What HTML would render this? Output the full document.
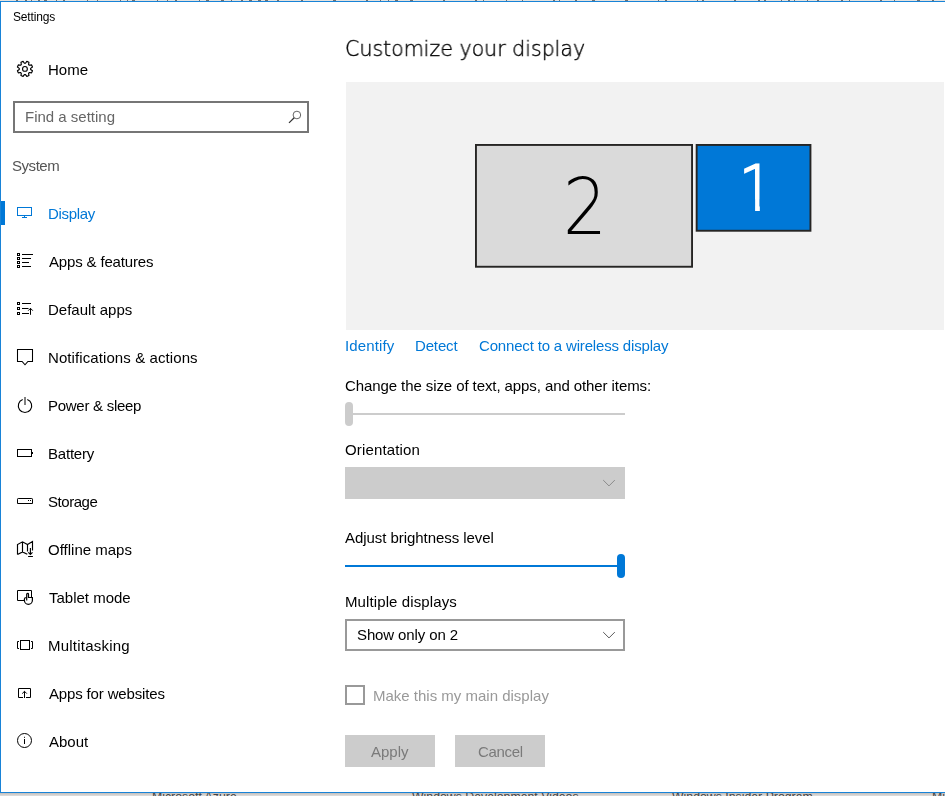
<!DOCTYPE html>
<html><head><meta charset="utf-8">
<style>
html,body{margin:0;padding:0;}
body{width:945px;height:796px;overflow:hidden;background:#fff;position:relative;font-family:"Liberation Sans",sans-serif;color:#000;}
.abs{position:absolute;white-space:nowrap;}
.t{position:absolute;white-space:nowrap;font-size:15px;line-height:20px;transform-origin:0 50%;will-change:transform;}
.nav{left:48px;}
.blue{color:#0078d7;}
svg{position:absolute;left:0;top:0;}
</style></head><body>
<!-- window chrome -->
<div class="abs" id="topstrip" style="left:0;top:0;width:945px;height:1px;background:#e4e2df;"></div>
<div class="abs" style="left:0;top:1px;width:945px;height:1px;background:#1883d7;"></div>
<div class="abs" style="left:0;top:1px;width:1px;height:792px;background:#1883d7;"></div>
<div class="abs" style="left:0;top:792px;width:945px;height:1px;background:#1883d7;"></div>
<div class="abs" id="botstrip" style="left:0;top:793px;width:945px;height:3px;background:linear-gradient(#c4bfbb,#dedede);overflow:hidden;font-size:12.3px;line-height:13px;color:#444;">
<div class="abs" id="b1" style="left:152px;top:-2px;">Microsoft Azure</div>
<div class="abs" id="b2" style="left:412px;top:-2px;">Windows Development Videos</div>
<div class="abs" id="b3" style="left:672px;top:-2px;">Windows Insider Program</div>
<div class="abs" id="b4" style="left:932px;top:-2px;">Microsoft</div>
</div>

<div class="t" id="title" style="letter-spacing:-0.157px;left:13px;top:7px;font-size:12px;">Settings</div>

<div class="t nav" id="home" style="top:60px;">Home</div>
<div class="abs" id="search" style="left:13px;top:101px;width:292px;height:28px;border:2px solid #767676;"></div>
<div class="t" id="find" style="left:25px;top:107px;color:#666;">Find a setting</div>
<div class="t" id="system" style="letter-spacing:-0.450px;left:12px;top:156px;color:#555;">System</div>

<div class="abs" style="left:1px;top:201px;width:4px;height:24px;background:#0078d7;"></div>
<div class="t nav blue" id="n0" style="letter-spacing:-0.333px;top:204px;">Display</div>
<div class="t nav" id="n1" style="letter-spacing:-0.161px;top:252px;left:49px;">Apps &amp; features</div>
<div class="t nav" id="n2" style="top:300px;">Default apps</div>
<div class="t nav" id="n3" style="letter-spacing:0.091px;top:348px;">Notifications &amp; actions</div>
<div class="t nav" id="n4" style="letter-spacing:-0.271px;top:396px;">Power &amp; sleep</div>
<div class="t nav" id="n5" style="letter-spacing:-0.208px;top:444px;">Battery</div>
<div class="t nav" id="n6" style="letter-spacing:-0.458px;top:492px;">Storage</div>
<div class="t nav" id="n7" style="top:540px;">Offline maps</div>
<div class="t nav" id="n8" style="top:588px;left:49px;">Tablet mode</div>
<div class="t nav" id="n9" style="letter-spacing:0.227px;top:636px;">Multitasking</div>
<div class="t nav" id="n10" style="letter-spacing:-0.156px;top:684px;left:49px;">Apps for websites</div>
<div class="t nav" id="n11" style="top:732px;left:49px;">About</div>

<!-- right pane -->
<div class="t" id="h1" style="left:344.5px;top:34px;font-family:'DejaVu Sans Light','DejaVu Sans',sans-serif;font-weight:200;font-size:21.5px;line-height:30px;color:#000;transform-origin:0 50%;transform:scaleX(0.956);-webkit-text-stroke:0.4px #000;">Customize your display</div>
<div class="abs" style="left:346px;top:82px;width:598px;height:248px;background:#f2f2f2;"></div>
<div class="abs" id="m2" style="left:475.5px;top:144.5px;width:217px;height:122.7px;background:#dadada;"></div>
<div class="abs" id="m1" style="left:696.2px;top:144.5px;width:114.7px;height:86.7px;background:#0078d7;"></div>
<div class="abs" id="d2" style="left:562.9px;top:158.9px;font-family:'DejaVu Sans Light','DejaVu Sans',sans-serif;font-weight:200;font-size:80px;line-height:100px;transform-origin:0 0;transform:scale(0.863,0.98);">2</div>
<div class="abs" id="d1" style="left:738.6px;top:145.9px;font-family:'DejaVu Sans Light','DejaVu Sans',sans-serif;font-weight:200;font-size:65px;line-height:90px;color:#fff;-webkit-text-stroke:2.05px #fff;transform-origin:0 0;transform:scale(0.84,0.949);clip-path:polygon(0 0,26px 0,26px 56px,24.8px 56px,24.8px 72px,19.15px 72px,19.15px 56px,0 56px);">1</div>

<div class="t blue" id="l1" style="letter-spacing:0.143px;left:345px;top:336px;">Identify</div>
<div class="t blue" id="l2" style="letter-spacing:-0.150px;left:415px;top:336px;">Detect</div>
<div class="t blue" id="l3" style="letter-spacing:-0.170px;left:479px;top:336px;">Connect to a wireless display</div>
<div class="t" id="c1" style="letter-spacing:-0.087px;left:345px;top:376px;">Change the size of text, apps, and other items:</div>
<div class="abs" style="left:345px;top:413px;width:280px;height:2px;background:#ccc;"></div>
<div class="abs" style="left:345px;top:402px;width:8px;height:24px;border-radius:4px;background:#ccc;"></div>
<div class="t" id="c2" style="letter-spacing:0.150px;left:345px;top:440px;">Orientation</div>
<div class="abs" style="left:345px;top:467px;width:280px;height:32px;background:#ccc;"></div>
<div class="t" id="c3" style="letter-spacing:-0.057px;left:345px;top:528px;">Adjust brightness level</div>
<div class="abs" style="left:345px;top:565px;width:280px;height:2px;background:#0078d7;"></div>
<div class="abs" style="left:617px;top:554px;width:8px;height:24px;border-radius:4px;background:#0078d7;"></div>
<div class="t" id="c4" style="letter-spacing:0.109px;left:345px;top:592px;">Multiple displays</div>
<div class="abs" style="left:345px;top:619px;width:276px;height:28px;border:2px solid #999;"></div>
<div class="t" id="c5" style="letter-spacing:-0.115px;left:357px;top:625px;">Show only on 2</div>
<div class="abs" style="left:345px;top:685px;width:16px;height:16px;border:2px solid #999;"></div>
<div class="t" id="c6" style="left:373px;top:686px;color:#999;">Make this my main display</div>
<div class="abs" style="left:345px;top:735px;width:90px;height:32px;background:#ccc;"></div>
<div class="abs" style="left:455px;top:735px;width:90px;height:32px;background:#ccc;"></div>
<div class="t" id="c7" style="left:371px;top:742px;color:#7a7a7a;">Apply</div>
<div class="t" id="c8" style="letter-spacing:-0.300px;left:477.5px;top:742px;color:#7a7a7a;">Cancel</div>

<svg width="945" height="796" viewBox="0 0 945 796" fill="none" stroke="#000" stroke-width="1">
<!-- background-window fragments on top row -->
<path d="M16.0 0.5 h2 M25.0 0.5 h2 M31.0 0.5 h1 M38.0 0.5 h2 M44.0 0.5 h3 M56.0 0.5 h1 M63.0 0.5 h2 M87.0 0.5 h1 M97.0 0.5 h1 M120.0 0.5 h1 M127.0 0.5 h1 M132.0 0.5 h3 M157.0 0.5 h1 M167.0 0.5 h1 M175.0 0.5 h2 M199.0 0.5 h1 M206.0 0.5 h3 M221.0 0.5 h3 M231.0 0.5 h1 M241.0 0.5 h2 M249.0 0.5 h3 M258.0 0.5 h3 M265.0 0.5 h3 M277.0 0.5 h2 M301.0 0.5 h2 M333.0 0.5 h3 M366.0 0.5 h2 M380.0 0.5 h1 M388.0 0.5 h1 M395.0 0.5 h3 M410.0 0.5 h3 M443.0 0.5 h2 M475.0 0.5 h2 M483.0 0.5 h1 M506.0 0.5 h1 M522.0 0.5 h1 M553.0 0.5 h2 M559.0 0.5 h1 M575.0 0.5 h2 M592.0 0.5 h3 M625.0 0.5 h3 M658.0 0.5 h1 M665.0 0.5 h2 M697.0 0.5 h1 M702.0 0.5 h2 M734.0 0.5 h2 M758.0 0.5 h2 M764.0 0.5 h2 M781.0 0.5 h1 M788.0 0.5 h2 M794.0 0.5 h1 M807.0 0.5 h1 M817.0 0.5 h2 M841.0 0.5 h2 M849.0 0.5 h1 M880.0 0.5 h2 M894.0 0.5 h1 M917.0 0.5 h3 M932.0 0.5 h2" stroke="#4a4a4a" stroke-opacity="0.75"/>
<!-- gear -->
<path d="M24.40 63.23 L25.50 63.23 L26.82 61.38 L28.94 62.26 L28.58 64.50 L29.35 65.27 L31.59 64.91 L32.47 67.03 L30.62 68.35 L30.62 69.45 L32.47 70.77 L31.59 72.89 L29.35 72.53 L28.58 73.30 L28.94 75.54 L26.82 76.42 L25.50 74.57 L24.40 74.57 L23.08 76.42 L20.96 75.54 L21.32 73.30 L20.55 72.53 L18.31 72.89 L17.43 70.77 L19.28 69.45 L19.28 68.35 L17.43 67.03 L18.31 64.91 L20.55 65.27 L21.32 64.50 L20.96 62.26 L23.08 61.38Z" stroke-width="1.15" stroke-linejoin="round"/>
<circle cx="24.95" cy="68.9" r="2.4" stroke-width="1.1"/>
<!-- search -->
<g stroke="#555" stroke-width="0.9"><circle cx="296.9" cy="115" r="3.8"/><path d="M294.2 117.7 L289 122.9" stroke="#333" stroke-width="1.25"/></g>
<!-- display -->
<g stroke="#0078d7"><rect x="17.5" y="207.5" width="14" height="8"/><path d="M24.5 216 V217.5 M22 217.5 H27"/></g>
<!-- apps & features -->
<g><rect x="17.5" y="253.5" width="2" height="2"/><rect x="17.5" y="257.5" width="2" height="2"/><rect x="17.5" y="261.5" width="2" height="2"/><rect x="17.5" y="265.5" width="2" height="2"/>
<path d="M22 254.5 H33 M22 258.5 H31 M22 262.5 H29 M22 266.5 H31"/></g>
<!-- default apps -->
<g><rect x="17.5" y="302.5" width="2" height="2"/><rect x="17.5" y="307.5" width="2" height="2"/><rect x="17.5" y="312.5" width="2" height="2"/>
<path d="M22 303.5 H31 M22 308.5 H28.5 M22 313.5 H29 M30.5 314.8 V308.3 M28.2 310.7 L30.5 308.3 L32.8 310.7"/></g>
<!-- notifications -->
<path d="M17.5 349.5 H32.5 V361.5 H27.9 L25 364.8 L22.1 361.5 H17.5 Z" stroke-width="1.05"/>
<!-- power -->
<path d="M22.7 399.5 A6.7 6.7 0 1 0 27.3 399.5" stroke-width="1.15"/>
<path d="M25 397 V405" stroke-width="1"/>
<!-- battery -->
<rect x="17.5" y="449.5" width="14" height="7"/><path d="M32.5 452 V454"/>
<!-- storage -->
<path d="M17.5 503.5 V499.2 Q17.5 498.5 18.2 498.5 H31.8 Q32.5 498.5 32.5 499.2 V503.5 Z"/><path d="M28 500.5 H29 M30 500.5 H31"/>
<!-- offline maps -->
<path stroke-width="1.15" d="M17.5 554.5 V544.5 L22.5 541.8 L27.5 544.5 L32.5 541.6 V550.6 M17.5 554.5 L22.5 552 L27.3 554.2 M22.5 541.8 V552 M27.5 544.5 V551.4 M30.4 548.1 V554.4 M28.3 552.3 L30.4 554.4 L32.5 552.3 M28.1 556.5 H32.9"/>
<!-- tablet mode -->
<path d="M24 600.5 H17.5 V590.5 H31.5 V597"/>
<path stroke-width="1.2" d="M26.7 600.6 V594.2 A0.9 0.9 0 0 1 28.5 594.2 V597.5 H32.4 V600.2 A4 4.2 0 0 1 24.4 600.2 V599 Q24.4 597.5 26.4 597.5"/>
<!-- multitasking -->
<rect x="20.5" y="640.5" width="9" height="9"/><path d="M19 641.5 H17.5 V648.5 H19 M31 641.5 H32.5 V648.5 H31"/>
<!-- apps for websites -->
<path d="M23 697.5 H18.5 V688.5 H30.5 V697.5 H26 M24.5 698 V691.3 M22.2 693.6 L24.5 691.3 L26.8 693.6"/>
<!-- about -->
<circle cx="24.5" cy="740.5" r="7"/><path d="M24.5 739 V744 M24.5 736.8 V737.8"/>
<!-- monitor borders -->
<rect x="475.95" y="144.95" width="216.1" height="121.8" stroke="#262524" stroke-width="1.9"/>
<rect x="696.65" y="144.95" width="113.8" height="85.8" stroke="#262524" stroke-width="1.9"/>
<!-- chevrons -->
<path d="M603.2 480.1 L609 485.9 L614.8 480.1" stroke="#8a8a8a"/>
<path d="M603.2 632.1 L609 637.9 L614.8 632.1" stroke="#5a5a5a"/>
</svg>
</body></html>
